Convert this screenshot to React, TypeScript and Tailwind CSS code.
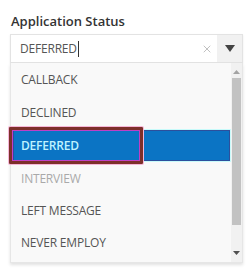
import { X } from 'lucide-react'

const options = [
  { label: 'CALLBACK', h: 'h-[32px]' },
  { label: 'DECLINED', h: 'h-[33px]' },
  { label: 'DEFERRED', h: 'h-[33px]' },
  { label: 'INTERVIEW', h: 'h-[33px]' },
  { label: 'LEFT MESSAGE', h: 'h-[32px]' },
  { label: 'NEVER EMPLOY', h: 'h-[31px]' },
]

function OptionRow({ label, h }: { label: string; h: string }) {
  if (label === 'DEFERRED') {
    return (
      <li className={`relative ${h}`}>
        <div className="absolute inset-x-0 top-0 bottom-0 border border-[#c8fbfb]">
          <div className="h-full border border-[#2d4f9c] bg-[#0b74c4]" />
        </div>
        <div className="absolute left-[-3px] top-[-2px] h-[37px] w-[134px] rounded-[1px] border-[3px] border-[#7d2f2a] shadow-[0_0_0_1px_#f6b7d8,inset_0_0_0_1px_#c03fc6]" />
        <span className="relative flex h-full items-center pl-[9px] text-[12px] font-semibold tracking-[-0.2px] text-[#bff3ff]">{label}</span>
      </li>
    )
  }
  return (
    <li className={`flex ${h} items-center pl-[9px] text-[12px] tracking-[-0.2px] ${label === 'INTERVIEW' ? 'text-[#a9a9a9]' : 'text-[#555]'}`}>
      {label}
    </li>
  )
}

export default function App() {
  return (
    <div className="h-[279px] w-[248px] bg-white pl-[10px] pr-[5px] pt-[13px] font-['Open_Sans',sans-serif]">
      <p className="mb-[5px] pl-[1px] text-[13px] leading-[16px] font-semibold text-[#333]">Application Status</p>
      <div className="flex h-[29px] items-stretch border border-[#e3e3e3] bg-white shadow-[0_1px_2px_rgba(0,0,0,0.08)]">
        <div className="flex flex-1 items-center pl-[9px] text-[12px] tracking-[-0.2px] text-[#555]">
          DEFERRED<span className="ml-[1px] h-[16px] w-px bg-[#333]" />
        </div>
        <div className="flex w-[20px] items-center justify-center text-[#a5a5a5]">
          <X size={12} strokeWidth={1.4} />
        </div>
        <div className="flex w-[25px] items-center justify-center bg-[#f1f1f1]">
          <svg width="10" height="7" viewBox="0 0 10 7">
            <path d="M0 0h10L5 7z" fill="#444" />
          </svg>
        </div>
      </div>
      <div className="flex h-[200px] border border-t-0 border-[#e6e6e6] bg-[#f9f9f9] shadow-[0_2px_3px_rgba(0,0,0,0.12)]">
        <ul className="flex-1 pt-px pl-px">
          {options.map((o) => (
            <OptionRow key={o.label} label={o.label} h={o.h} />
          ))}
        </ul>
        <div className="flex w-[11px] flex-col items-center bg-[#f1f1f1]">
          <svg width="7" height="4" viewBox="0 0 7 4" className="mt-[7px]">
            <path d="M0 4h7L3.5 0z" fill="#a3a3a3" />
          </svg>
          <div className="mt-[4px] h-[147px] w-[9px] bg-[#c2c2c2]" />
          <svg width="7" height="4" viewBox="0 0 7 4" className="mt-auto mb-[7px]">
            <path d="M0 0h7L3.5 4z" fill="#505050" />
          </svg>
        </div>
      </div>
    </div>
  )
}
